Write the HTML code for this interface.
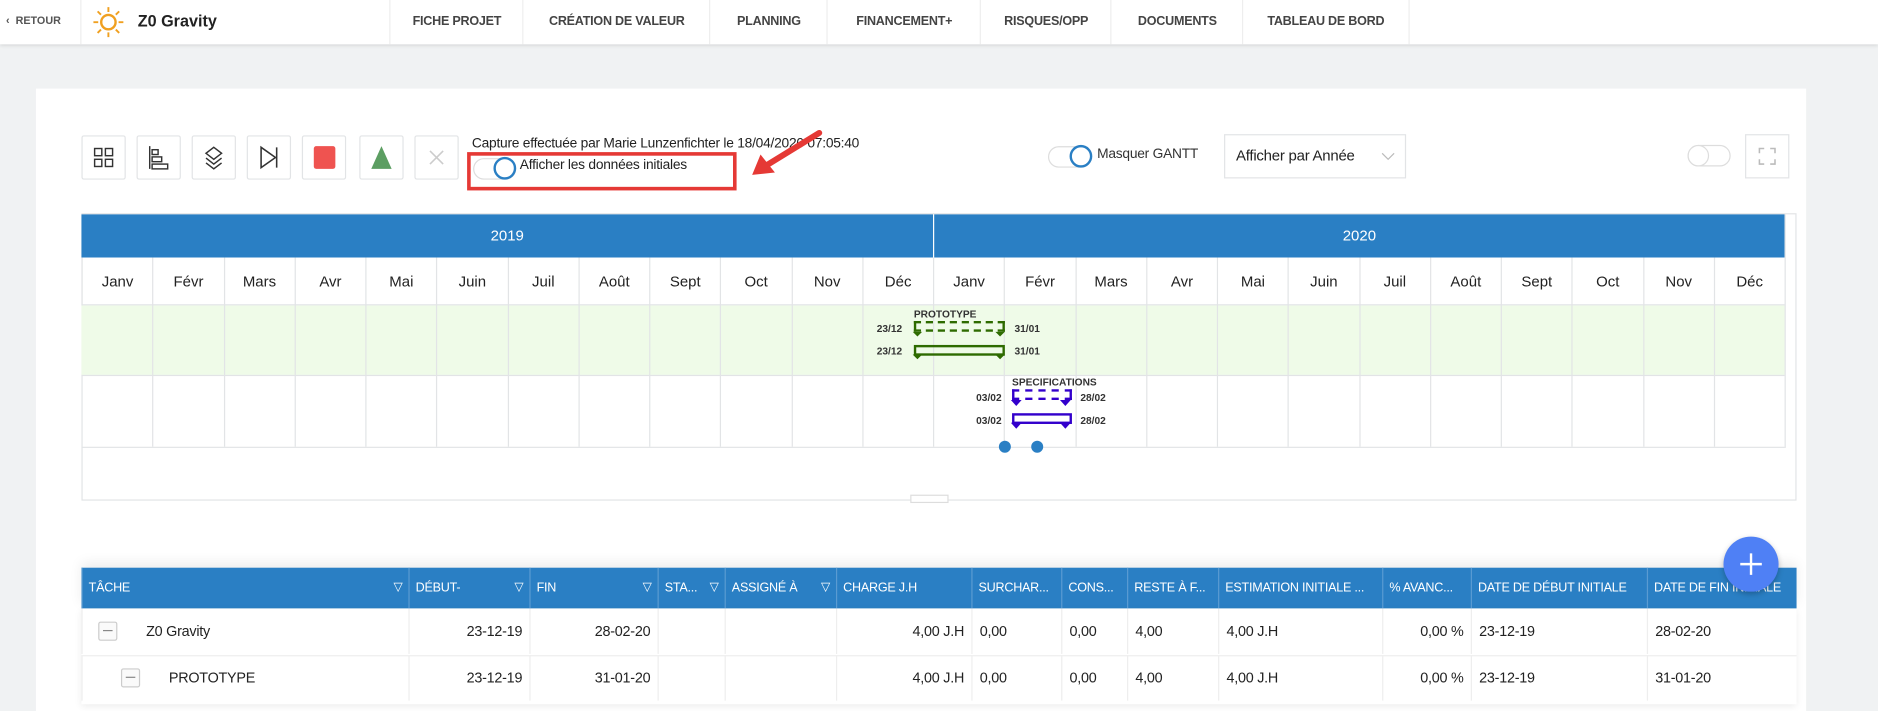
<!DOCTYPE html>
<html><head><meta charset="utf-8"><style>
html,body{margin:0;padding:0;width:1878px;height:688px;overflow:hidden;background:#f0f2f3;font-family:"Liberation Sans",Arial,sans-serif;}
#w{position:absolute;left:0;top:0;width:1568px;height:574px;transform:scale(1.19770);transform-origin:0 0;}
.a{position:absolute;}
.top{left:0;top:0;width:1568px;height:37px;background:#fff;box-shadow:0 1px 3px rgba(0,0,0,.12);}
.nav{position:absolute;top:0;height:37px;line-height:37px;font-size:10.5px;color:#444;text-align:center;border-left:1px solid #eee;font-weight:bold;letter-spacing:-0.2px}
.card{left:30px;top:74px;width:1478px;height:520px;background:#fff;}
.btn{position:absolute;top:113px;width:35px;height:35px;border:1px solid #e2e4e6;background:#fff;border-radius:2px;}
.tog{position:absolute;width:34px;height:16px;border:1px solid #ddd;border-radius:9px;background:#fff;}
.gh{background:#2a7fc4;color:#fff;font-size:12.5px;text-align:center;line-height:36px;}
.m{position:absolute;top:215px;height:40px;line-height:40px;text-align:center;font-size:12.5px;color:#222;border-left:1px solid #e2e4e6;box-sizing:border-box;}
.vl{position:absolute;width:1px;background:#e2e4e6;}
.lbl{position:absolute;font-size:8.5px;font-weight:bold;color:#333;}
.th{position:absolute;top:474px;height:34px;line-height:34px;color:#fff;font-size:10.5px;padding-left:5px;box-sizing:border-box;border-left:1px solid #5a9bd2;white-space:nowrap;overflow:hidden;letter-spacing:-0.2px}
.td{position:absolute;height:38px;line-height:38px;font-size:12px;color:#222;box-sizing:border-box;border-left:1px solid #eee;padding:0 6px;white-space:nowrap;letter-spacing:-0.2px}
.f{position:absolute;right:5px;top:0;font-size:10px;}
</style></head><body><div id="w">
<div class="a top">
 <div class="a" style="left:5px;top:12px;font-size:9px;color:#555;font-weight:bold;">&lsaquo;&nbsp; RETOUR</div>
 <div class="a" style="left:67px;top:0;width:1px;height:37px;background:#eee"></div>
 <svg class="a" style="left:77px;top:5px" width="27" height="27" viewBox="0 0 27 27"><circle cx="13.5" cy="13.5" r="6" fill="none" stroke="#f0a020" stroke-width="2"/><g stroke="#f0a020" stroke-width="1.6"><line x1="13.5" y1="1" x2="13.5" y2="5"/><line x1="13.5" y1="22" x2="13.5" y2="26"/><line x1="1" y1="13.5" x2="5" y2="13.5"/><line x1="22" y1="13.5" x2="26" y2="13.5"/><line x1="4.5" y1="4.5" x2="7.3" y2="7.3"/><line x1="19.7" y1="19.7" x2="22.5" y2="22.5"/><line x1="4.5" y1="22.5" x2="7.3" y2="19.7"/><line x1="19.7" y1="7.3" x2="22.5" y2="4.5"/></g></svg>
 <div class="a" style="left:115px;top:10px;font-size:13.5px;color:#222;font-weight:bold">Z0 Gravity</div>
 <div class="nav" style="left:325px;width:111px">FICHE PROJET</div>
 <div class="nav" style="left:436px;width:156px">CRÉATION DE VALEUR</div>
 <div class="nav" style="left:592px;width:98px">PLANNING</div>
 <div class="nav" style="left:690px;width:128px">FINANCEMENT+</div>
 <div class="nav" style="left:818px;width:109px">RISQUES/OPP</div>
 <div class="nav" style="left:927px;width:110px">DOCUMENTS</div>
 <div class="nav" style="left:1037px;width:138px;border-right:1px solid #eee">TABLEAU DE BORD</div>
</div>
<div class="a card"></div>
<div class="btn" style="left:68px"><svg width="35" height="35"><g fill="none" stroke="#333" stroke-width="1.2"><rect x="10" y="10" width="6" height="6"/><rect x="19" y="10" width="6" height="6"/><rect x="10" y="19" width="6" height="6"/><rect x="19" y="19" width="6" height="6"/></g></svg></div>
<div class="btn" style="left:114px"><svg width="35" height="35"><g fill="none" stroke="#333" stroke-width="1.2"><line x1="10" y1="8" x2="10" y2="27"/><rect x="12" y="11" width="5" height="4"/><rect x="12" y="17" width="8" height="4"/><rect x="12" y="23" width="13" height="4"/></g></svg></div>
<div class="btn" style="left:160px"><svg width="35" height="35"><g fill="none" stroke="#333" stroke-width="1.2"><path d="M17.5 9 L24 14 L17.5 19 L11 14 Z"/><path d="M11 18 L17.5 23 L24 18"/><path d="M11 22 L17.5 27 L24 22"/></g></svg></div>
<div class="btn" style="left:206px"><svg width="35" height="35"><g fill="none" stroke="#333" stroke-width="1.3"><path d="M11 9 L23 17.5 L11 26 Z"/><line x1="24" y1="9" x2="24" y2="26"/></g></svg></div>
<div class="btn" style="left:252px"><svg width="35" height="35"><rect x="9" y="8" width="18" height="19" rx="2" fill="#ef5350"/></svg></div>
<div class="btn" style="left:300px"><svg width="35" height="35"><path d="M17.5 8 L26 27 L9 27 Z" fill="#5c9e62"/></svg></div>
<div class="btn" style="left:346px"><svg width="35" height="35"><g stroke="#ccc" stroke-width="1.3"><line x1="12" y1="12" x2="23" y2="23"/><line x1="23" y1="12" x2="12" y2="23"/></g></svg></div>
<div class="a" style="left:394px;top:114px;font-size:11.5px;color:#222;letter-spacing:-0.2px">Capture effectuée par Marie Lunzenfichter le 18/04/2020 07:05:40</div>
<div class="tog" style="left:395px;top:132px"></div>
<div class="a" style="left:412px;top:131px;width:15px;height:15px;border:2px solid #2a7fc4;border-radius:50%;background:#fff"></div>
<div class="a" style="left:434px;top:132px;font-size:11.5px;color:#222;letter-spacing:-0.2px">Afficher les données initiales</div>
<div class="a" style="left:390px;top:127px;width:219px;height:26px;border:3px solid #e53935"></div>
<svg class="a" style="left:620px;top:104px" width="70" height="48"><line x1="64" y1="7" x2="20" y2="34" stroke="#e53935" stroke-width="5" stroke-linecap="round"/><path d="M8 42 L15 25 L27 40 Z" fill="#e53935"/></svg>
<div class="tog" style="left:875px;top:122px"></div>
<div class="a" style="left:893px;top:121px;width:15px;height:15px;border:2px solid #2a7fc4;border-radius:50%;background:#fff"></div>
<div class="a" style="left:916px;top:123px;font-size:11.5px;color:#333;letter-spacing:-0.2px">Masquer GANTT</div>
<div class="a" style="left:1022px;top:112px;width:150px;height:35px;border:1px solid #e2e4e6;background:#fff"><span class="a" style="left:9px;top:10px;font-size:12.5px;color:#222;letter-spacing:-0.2px">Afficher par Année</span><svg class="a" style="left:130px;top:14px" width="12" height="8"><path d="M1 1 L6 6 L11 1" fill="none" stroke="#bbb"/></svg></div>
<div class="tog" style="left:1409px;top:121px"></div><div class="a" style="left:1409px;top:121px;width:16px;height:16px;border:1px solid #ddd;border-radius:50%;background:#fff"></div>
<div class="a" style="left:1457px;top:112px;width:35px;height:35px;border:1px solid #e2e4e6;background:#fff"><svg width="35" height="35"><g fill="none" stroke="#bbb" stroke-width="1.3"><path d="M11 15 V11 H15 M20 11 H24 V15 M24 20 V24 H20 M15 24 H11 V20"/></g></svg></div>
<!-- gantt -->
<div class="a" style="left:68px;top:178px;width:1432px;height:240px;border:1px solid #e2e4e6;box-sizing:border-box;background:#fff"></div>
<div class="a gh" style="left:68px;top:179px;width:711px;height:36px">2019</div>
<div class="a gh" style="left:780px;top:179px;width:710px;height:36px">2020</div>
<div class="a" style="left:68px;top:255px;width:1422px;height:58px;background:#effbe8"></div>
<div class="a" style="left:68px;top:254px;width:1422px;height:1px;background:#e2e4e6"></div>
<div class="a" style="left:68px;top:313px;width:1422px;height:1px;background:#e2e4e6"></div>
<div class="a" style="left:68px;top:373px;width:1422px;height:1px;background:#e2e4e6"></div>
<div id="months"></div>
<div class="lbl" style="left:763px;top:257px">PROTOTYPE</div>
<div class="lbl" style="left:732px;top:269px">23/12</div><div class="lbl" style="left:847px;top:269px">31/01</div>
<div class="lbl" style="left:732px;top:288px">23/12</div><div class="lbl" style="left:847px;top:288px">31/01</div>
<div class="a" style="left:763px;top:268px;width:72px;height:5px;border:2px dashed #2e6b00"></div>
<div class="a" style="left:763px;top:288px;width:72px;height:5px;border:2px solid #2e6b00"></div>
<svg class="a" style="left:762px;top:277px" width="80" height="25"><g fill="#2e6b00"><path d="M0 0 H8 L4 4Z"/><path d="M69 0 H77 L73 4Z"/><path d="M0 19 H8 L4 23Z"/><path d="M69 19 H77 L73 23Z"/></g></svg>
<div class="lbl" style="left:845px;top:314px">SPECIFICATIONS</div>
<div class="lbl" style="left:815px;top:327px">03/02</div><div class="lbl" style="left:902px;top:327px">28/02</div>
<div class="lbl" style="left:815px;top:346px">03/02</div><div class="lbl" style="left:902px;top:346px">28/02</div>
<div class="a" style="left:845px;top:325px;width:46px;height:5px;border:2px dashed #3300cc"></div>
<div class="a" style="left:845px;top:345px;width:46px;height:5px;border:2px solid #3300cc"></div>
<svg class="a" style="left:844px;top:334px" width="62" height="25"><g fill="#3300cc"><path d="M0 0 H9 L4.5 5Z"/><path d="M41 0 H50 L45.5 5Z"/><path d="M0 19 H9 L4.5 24Z"/><path d="M41 19 H50 L45.5 24Z"/></g></svg>
<div class="a" style="left:834px;top:368px;width:10px;height:10px;border-radius:50%;background:#2a7fc4"></div>
<div class="a" style="left:861px;top:368px;width:10px;height:10px;border-radius:50%;background:#2a7fc4"></div>
<div class="a" style="left:760px;top:413px;width:30px;height:5px;border:1px solid #ddd;background:#fff"></div>
<!-- table -->
<div class="a" style="left:68px;top:474px;width:1432px;height:34px;background:#2a7fc4;box-shadow:0 -4px 10px rgba(0,0,0,.08)"></div>
<div class="a" style="left:68px;top:508px;width:1432px;height:80px;background:#fff;box-shadow:0 2px 6px rgba(0,0,0,.08)"></div>
<div class="a" style="left:68px;top:547px;width:1432px;height:1px;background:#eee"></div>
<div id="tbl"></div>
<div class="a" style="left:1439px;top:448px;width:46px;height:46px;border-radius:50%;background:#4f80f5;box-shadow:0 2px 5px rgba(0,0,0,.25)"><svg width="46" height="46"><g stroke="#fff" stroke-width="2"><line x1="23" y1="14" x2="23" y2="32"/><line x1="14" y1="23" x2="32" y2="23"/></g></svg></div>
</div>
<script>
var ms=["Janv","Févr","Mars","Avr","Mai","Juin","Juil","Août","Sept","Oct","Nov","Déc"],h="";
for(var i=0;i<24;i++){var x=68+i*59.25;h+='<div class="m" style="left:'+x+'px;width:59.25px">'+ms[i%12]+'</div>';
if(i>0)h+='<div class="vl" style="left:'+x+'px;top:255px;height:118px"></div>';}
h+='<div class="vl" style="left:1490px;top:179px;height:195px"></div>';
document.getElementById("months").innerHTML=h;
var c=[68,341,442,549,605,698,811,886,941,1017,1154,1228,1375,1500];
var hd=["TÂCHE","DÉBUT-","FIN","STA...","ASSIGNÉ À","CHARGE J.H","SURCHAR...","CONS...","RESTE À F...","ESTIMATION INITIALE ...","% AVANC...","DATE DE DÉBUT INITIALE","DATE DE FIN INITIALE"];
var r1=["Z0 Gravity","23-12-19","28-02-20","","","4,00 J.H","0,00","0,00","4,00","4,00 J.H","0,00 %","23-12-19","28-02-20"];
var r2=["PROTOTYPE","23-12-19","31-01-20","","","4,00 J.H","0,00","0,00","4,00","4,00 J.H","0,00 %","23-12-19","31-01-20"];
var al=["l","r","r","l","l","r","l","l","l","l","r","l","l"];
h="";
for(var j=0;j<13;j++){var w=c[j+1]-c[j];
h+='<div class="th" style="left:'+c[j]+'px;width:'+w+'px">'+hd[j]+(j<5?'<span class="f">&#x25BD;</span>':'')+'</div>';
[[r1,508],[r2,547]].forEach(function(p,k){var t=p[0][j];var st='left:'+c[j]+'px;top:'+p[1]+'px;width:'+w+'px;text-align:'+(al[j]=="r"?"right":"left")+';';
if(j==0){st+='padding-left:'+(k?72:53)+'px;';}
h+='<div class="td" style="'+st+'">'+t+'</div>';
if(j==0)h+='<div class="a" style="left:'+(k?101:82)+'px;top:'+(p[1]+11)+'px;width:14px;height:14px;border:1px solid #ccc;border-radius:2px;background:#fafafa"><div class="a" style="left:3px;top:6px;width:8px;height:1px;background:#888"></div></div>';});}
document.getElementById("tbl").innerHTML=h;
</script>
</body></html>
